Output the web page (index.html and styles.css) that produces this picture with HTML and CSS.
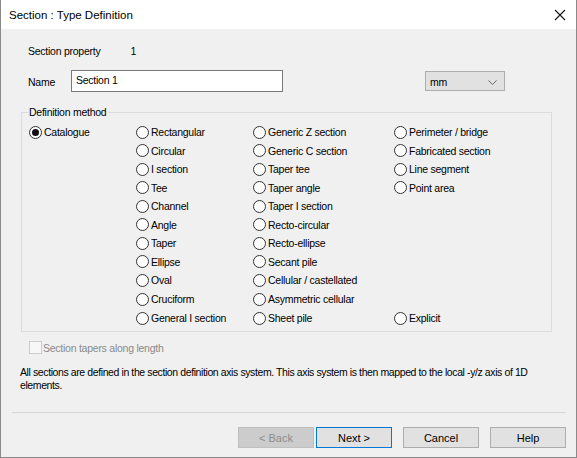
FILE: index.html
```html
<!DOCTYPE html>
<html lang="en">
<head>
    <meta charset="UTF-8">
    <title>Section : Type Definition</title>
    <link rel="stylesheet" href="styles.css">
</head>
<body>
    <div class="window">
        <div class="titlebar">
            <span class="title">Section : Type Definition</span>
            <svg class="close" width="12" height="12" viewBox="0 0 12 12">
                <path d="M1 1 L11 11 M11 1 L1 11" stroke="#111" stroke-width="1.1" fill="none"/>
            </svg>
        </div>

        <div class="content">
            <div class="prop-row">
                <span class="prop-label">Section property</span>
                <span class="prop-value">1</span>
            </div>

            <div class="name-row">
                <span class="name-label">Name</span>
                <div class="textbox">Section 1</div>
                <div class="combo">
                    <span>mm</span>
                    <svg width="9" height="5" viewBox="0 0 9 5">
                        <path d="M0.5 0.5 L4.5 4.5 L8.5 0.5" stroke="#666" fill="none"/>
                    </svg>
                </div>
            </div>

            <!-- Groupe "Definition method" -->
            <div class="group">
                <span class="legend">Definition method</span>
                <div class="columns">
                    <div class="col col1">
                        <label class="radio checked"><span class="dot"></span>Catalogue</label>
                    </div>
                    <div class="col col2">
                        <label class="radio"><span class="dot"></span>Rectangular</label>
                        <label class="radio"><span class="dot"></span>Circular</label>
                        <label class="radio"><span class="dot"></span>I section</label>
                        <label class="radio"><span class="dot"></span>Tee</label>
                        <label class="radio"><span class="dot"></span>Channel</label>
                        <label class="radio"><span class="dot"></span>Angle</label>
                        <label class="radio"><span class="dot"></span>Taper</label>
                        <label class="radio"><span class="dot"></span>Ellipse</label>
                        <label class="radio"><span class="dot"></span>Oval</label>
                        <label class="radio"><span class="dot"></span>Cruciform</label>
                        <label class="radio"><span class="dot"></span>General I section</label>
                    </div>
                    <div class="col col3">
                        <label class="radio"><span class="dot"></span>Generic Z section</label>
                        <label class="radio"><span class="dot"></span>Generic C section</label>
                        <label class="radio"><span class="dot"></span>Taper tee</label>
                        <label class="radio"><span class="dot"></span>Taper angle</label>
                        <label class="radio"><span class="dot"></span>Taper I section</label>
                        <label class="radio"><span class="dot"></span>Recto-circular</label>
                        <label class="radio"><span class="dot"></span>Recto-ellipse</label>
                        <label class="radio"><span class="dot"></span>Secant pile</label>
                        <label class="radio"><span class="dot"></span>Cellular / castellated</label>
                        <label class="radio"><span class="dot"></span>Asymmetric cellular</label>
                        <label class="radio"><span class="dot"></span>Sheet pile</label>
                    </div>
                    <div class="col col4">
                        <label class="radio"><span class="dot"></span>Perimeter / bridge</label>
                        <label class="radio"><span class="dot"></span>Fabricated section</label>
                        <label class="radio"><span class="dot"></span>Line segment</label>
                        <label class="radio"><span class="dot"></span>Point area</label>
                        <label class="radio explicit"><span class="dot"></span>Explicit</label>
                    </div>
                </div>
            </div>

            <label class="checkbox disabled"><span class="box"></span>Section tapers along length</label>

            <p class="note">All sections are defined in the section definition axis system. This axis system is then mapped to the local -y/z axis of 1D elements.</p>
        </div>

        <div class="footer">
            <button class="btn disabled">&lt; Back</button>
            <button class="btn default">Next &gt;</button>
            <button class="btn gap">Cancel</button>
            <button class="btn gap">Help</button>
        </div>
    </div>
</body>
</html>
```

FILE: styles.css
```css
html, body {
    margin: 0;
    padding: 0;
}
body {
    font-family: "Liberation Sans", Arial, sans-serif;
    font-size: 10.5px;
    letter-spacing: -0.25px;
    color: #000;
    background: #f0f0f0;
}
.window {
    width: 577px;
    height: 458px;
    box-sizing: border-box;
    border: 1px solid #8a8a8a;
    border-top: none;
    background: #f0f0f0;
    display: flex;
    flex-direction: column;
}

/* Barre de titre */
.titlebar {
    height: 29px;
    background: #fff;
    display: flex;
    align-items: center;
    justify-content: space-between;
    padding: 0 10px 0 8px;
}
.title {
    font-size: 11.5px;
    letter-spacing: 0;
}

.content {
    padding: 0 0 0 20px;
}
.prop-row {
    display: flex;
    height: 18px;
    align-items: center;
    margin-top: 13px;
    padding-left: 7px;
}
.prop-value {
    margin-left: 30px;
}
.name-row {
    display: flex;
    align-items: center;
    margin-top: 10px;
    padding-left: 7px;
}
.name-label {
    width: 43px;
    padding-top: 2px;
}
.textbox {
    width: 212px;
    height: 22px;
    box-sizing: border-box;
    border: 1px solid #7a7a7a;
    background: #fff;
    padding: 0 0 0 4px;
    line-height: 18px;
}
.combo {
    margin-left: 142px;
    width: 80px;
    height: 20px;
    box-sizing: border-box;
    border: 1px solid #adadad;
    background: #e1e1e1;
    display: flex;
    align-items: center;
    justify-content: space-between;
    padding: 2px 7px 0 4px;
}

/* Groupe de boutons radio */
.group {
    position: relative;
    margin-top: 20px;
    width: 531px;
    box-sizing: border-box;
    border: 1px solid #dcdcdc;
    padding: 10px 0 3px 7px;
}
.legend {
    position: absolute;
    top: -7px;
    left: 6px;
    padding: 0 2px 0 1px;
    background: #f0f0f0;
}
.columns {
    display: flex;
}
.col {
    display: flex;
    flex-direction: column;
}
.col1 { width: 107px; }
.col2 { width: 117px; }
.col3 { width: 141px; }
.radio {
    display: flex;
    align-items: center;
    height: 18.5px;
    white-space: nowrap;
}
.radio:nth-child(n+10),
.radio.explicit {
    height: 19px;
}
.radio .dot {
    width: 13px;
    height: 13px;
    box-sizing: border-box;
    border: 1px solid #333;
    border-radius: 50%;
    background: #fff;
    margin-right: 2px;
    position: relative;
}
.radio.checked .dot::after {
    content: "";
    position: absolute;
    left: 2px;
    top: 2px;
    width: 7px;
    height: 7px;
    border-radius: 50%;
    background: #111;
}
.explicit {
    margin-top: auto;
}

.checkbox {
    display: flex;
    align-items: center;
    margin: 9px 0 0 8px;
    height: 14px;
}
.checkbox .box {
    width: 13px;
    height: 13px;
    box-sizing: border-box;
    border: 1px solid #ccc;
    background: #f7f7f7;
    margin-right: 1px;
}
.checkbox.disabled {
    color: #8a8a8a;
}
.note {
    margin: 11px 0 0 -1px;
    width: 530px;
    line-height: 13px;
    letter-spacing: -0.4px;
}

/* Boutons du bas */
.footer {
    margin: auto 10px 0 11px;
    border-top: 1px solid #d6d6d6;
    display: flex;
    justify-content: flex-end;
    padding: 14px 0 9px 0;
}
.btn {
    font-family: inherit;
    font-size: 11px;
    letter-spacing: 0;
    width: 76px;
    height: 21px;
    box-sizing: border-box;
    border: 1px solid #adadad;
    background: #e1e1e1;
    color: #000;
    padding: 0;
    margin-left: 2px;
}
.btn.gap {
    margin-left: 11px;
}
.btn.disabled {
    background: #cccccc;
    border-color: #bfbfbf;
    color: #8d8d8d;
}
.btn.default {
    border: 1px solid #0078d7;
}
```
